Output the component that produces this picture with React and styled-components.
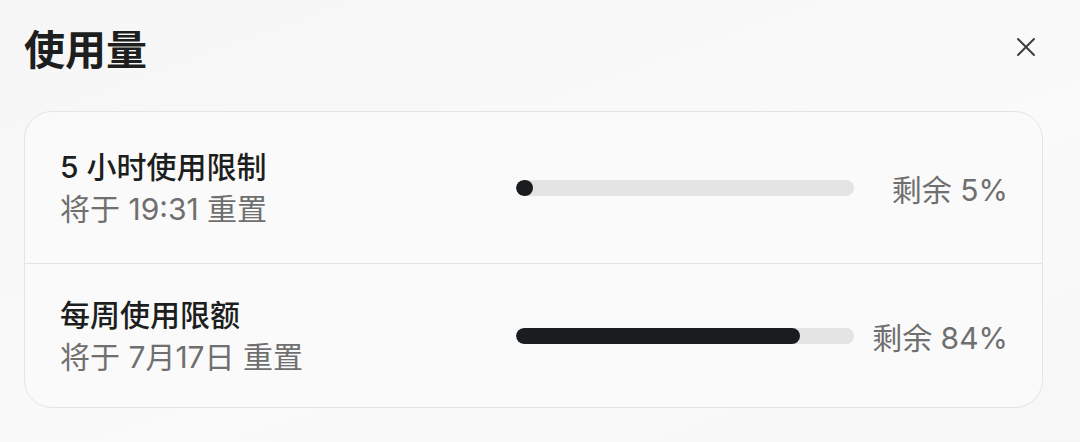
import React from 'react';
import styled, { createGlobalStyle } from 'styled-components';

const GlobalStyle = createGlobalStyle`
  html, body {
    margin: 0;
    padding: 0;
    background: #f7f7f7;
  }
  body {
    font-family: "Inter", "Noto Sans CJK SC", sans-serif;
    -webkit-font-smoothing: antialiased;
  }
`;

const Page = styled.div`
  width: 1080px;
  height: 442px;
  box-sizing: border-box;
  padding: 0 37px 0 24px;
  background: linear-gradient(160deg, #f6f6f6 0%, #fafafa 60%, #f7f7f7 100%);
`;

const Header = styled.div`
  height: 94px;
  display: flex;
  align-items: center;
  justify-content: space-between;
`;

const Title = styled.h1`
  margin: 0;
  font-family: "Noto Sans CJK SC", sans-serif;
  font-size: 41px;
  font-weight: 700;
  color: #1c1e20;
  line-height: 1;
`;

const CloseButton = styled.button`
  border: 0;
  background: none;
  padding: 0;
  margin-right: 7px;
  width: 20px;
  height: 20px;
  display: flex;
  align-items: center;
  justify-content: center;
  cursor: pointer;
`;

const Card = styled.div`
  margin-top: 17px;
  border: 1.5px solid #e4e4e4;
  border-radius: 28px;
  background: #fafafa;
  overflow: hidden;
`;

const Row = styled.div`
  display: grid;
  grid-template-columns: 1fr 338px 154px;
  align-items: center;
  height: ${(p) => p.$height}px;
  padding: 0 34px 0 35px;
  border-top: ${(p) => (p.$first ? 'none' : '1.5px solid #e4e4e4')};
  box-sizing: border-box;
`;

const Info = styled.div`
  display: flex;
  flex-direction: column;
`;

const Name = styled.div`
  font-size: 30px;
  line-height: 42px;
  font-weight: 500;
  color: #1c1e20;
`;

const Reset = styled.div`
  font-size: 30px;
  line-height: 42px;
  color: #6f6f6f;
`;

const Track = styled.div`
  height: 16px;
  border-radius: 8px;
  background: #e4e4e4;
  overflow: hidden;
`;

const Fill = styled.div`
  height: 100%;
  min-width: 16px;
  border-radius: 8px;
  background: #1a1d20;
`;

const Remaining = styled.div`
  text-align: right;
  font-size: 30px;
  color: #6f6f6f;
`;

const limits = [
  { name: '5 小时使用限制', reset: '将于 19:31 重置', left: 5, height: 151 },
  { name: '每周使用限额', reset: '将于 7月17日 重置', left: 84, height: 144 },
];

const CloseIcon = () => (
  <svg width="20" height="20" viewBox="0 0 20 20" fill="none">
    <path d="M2 2L18 18M18 2L2 18" stroke="#3c3e40" strokeWidth="2" strokeLinecap="round" />
  </svg>
);

const App = () => (
  <>
    <GlobalStyle />
    <Page>
      <Header>
        <Title>使用量</Title>
        <CloseButton aria-label="关闭">
          <CloseIcon />
        </CloseButton>
      </Header>
      <Card>
        {limits.map((item, i) => (
          <Row key={item.name} $first={i === 0} $height={item.height}>
            <Info>
              <Name>{item.name}</Name>
              <Reset>{item.reset}</Reset>
            </Info>
            <Track>
              <Fill style={{ width: `${item.left}%` }} />
            </Track>
            <Remaining>剩余 {item.left}%</Remaining>
          </Row>
        ))}
      </Card>
    </Page>
  </>
);

export default App;
